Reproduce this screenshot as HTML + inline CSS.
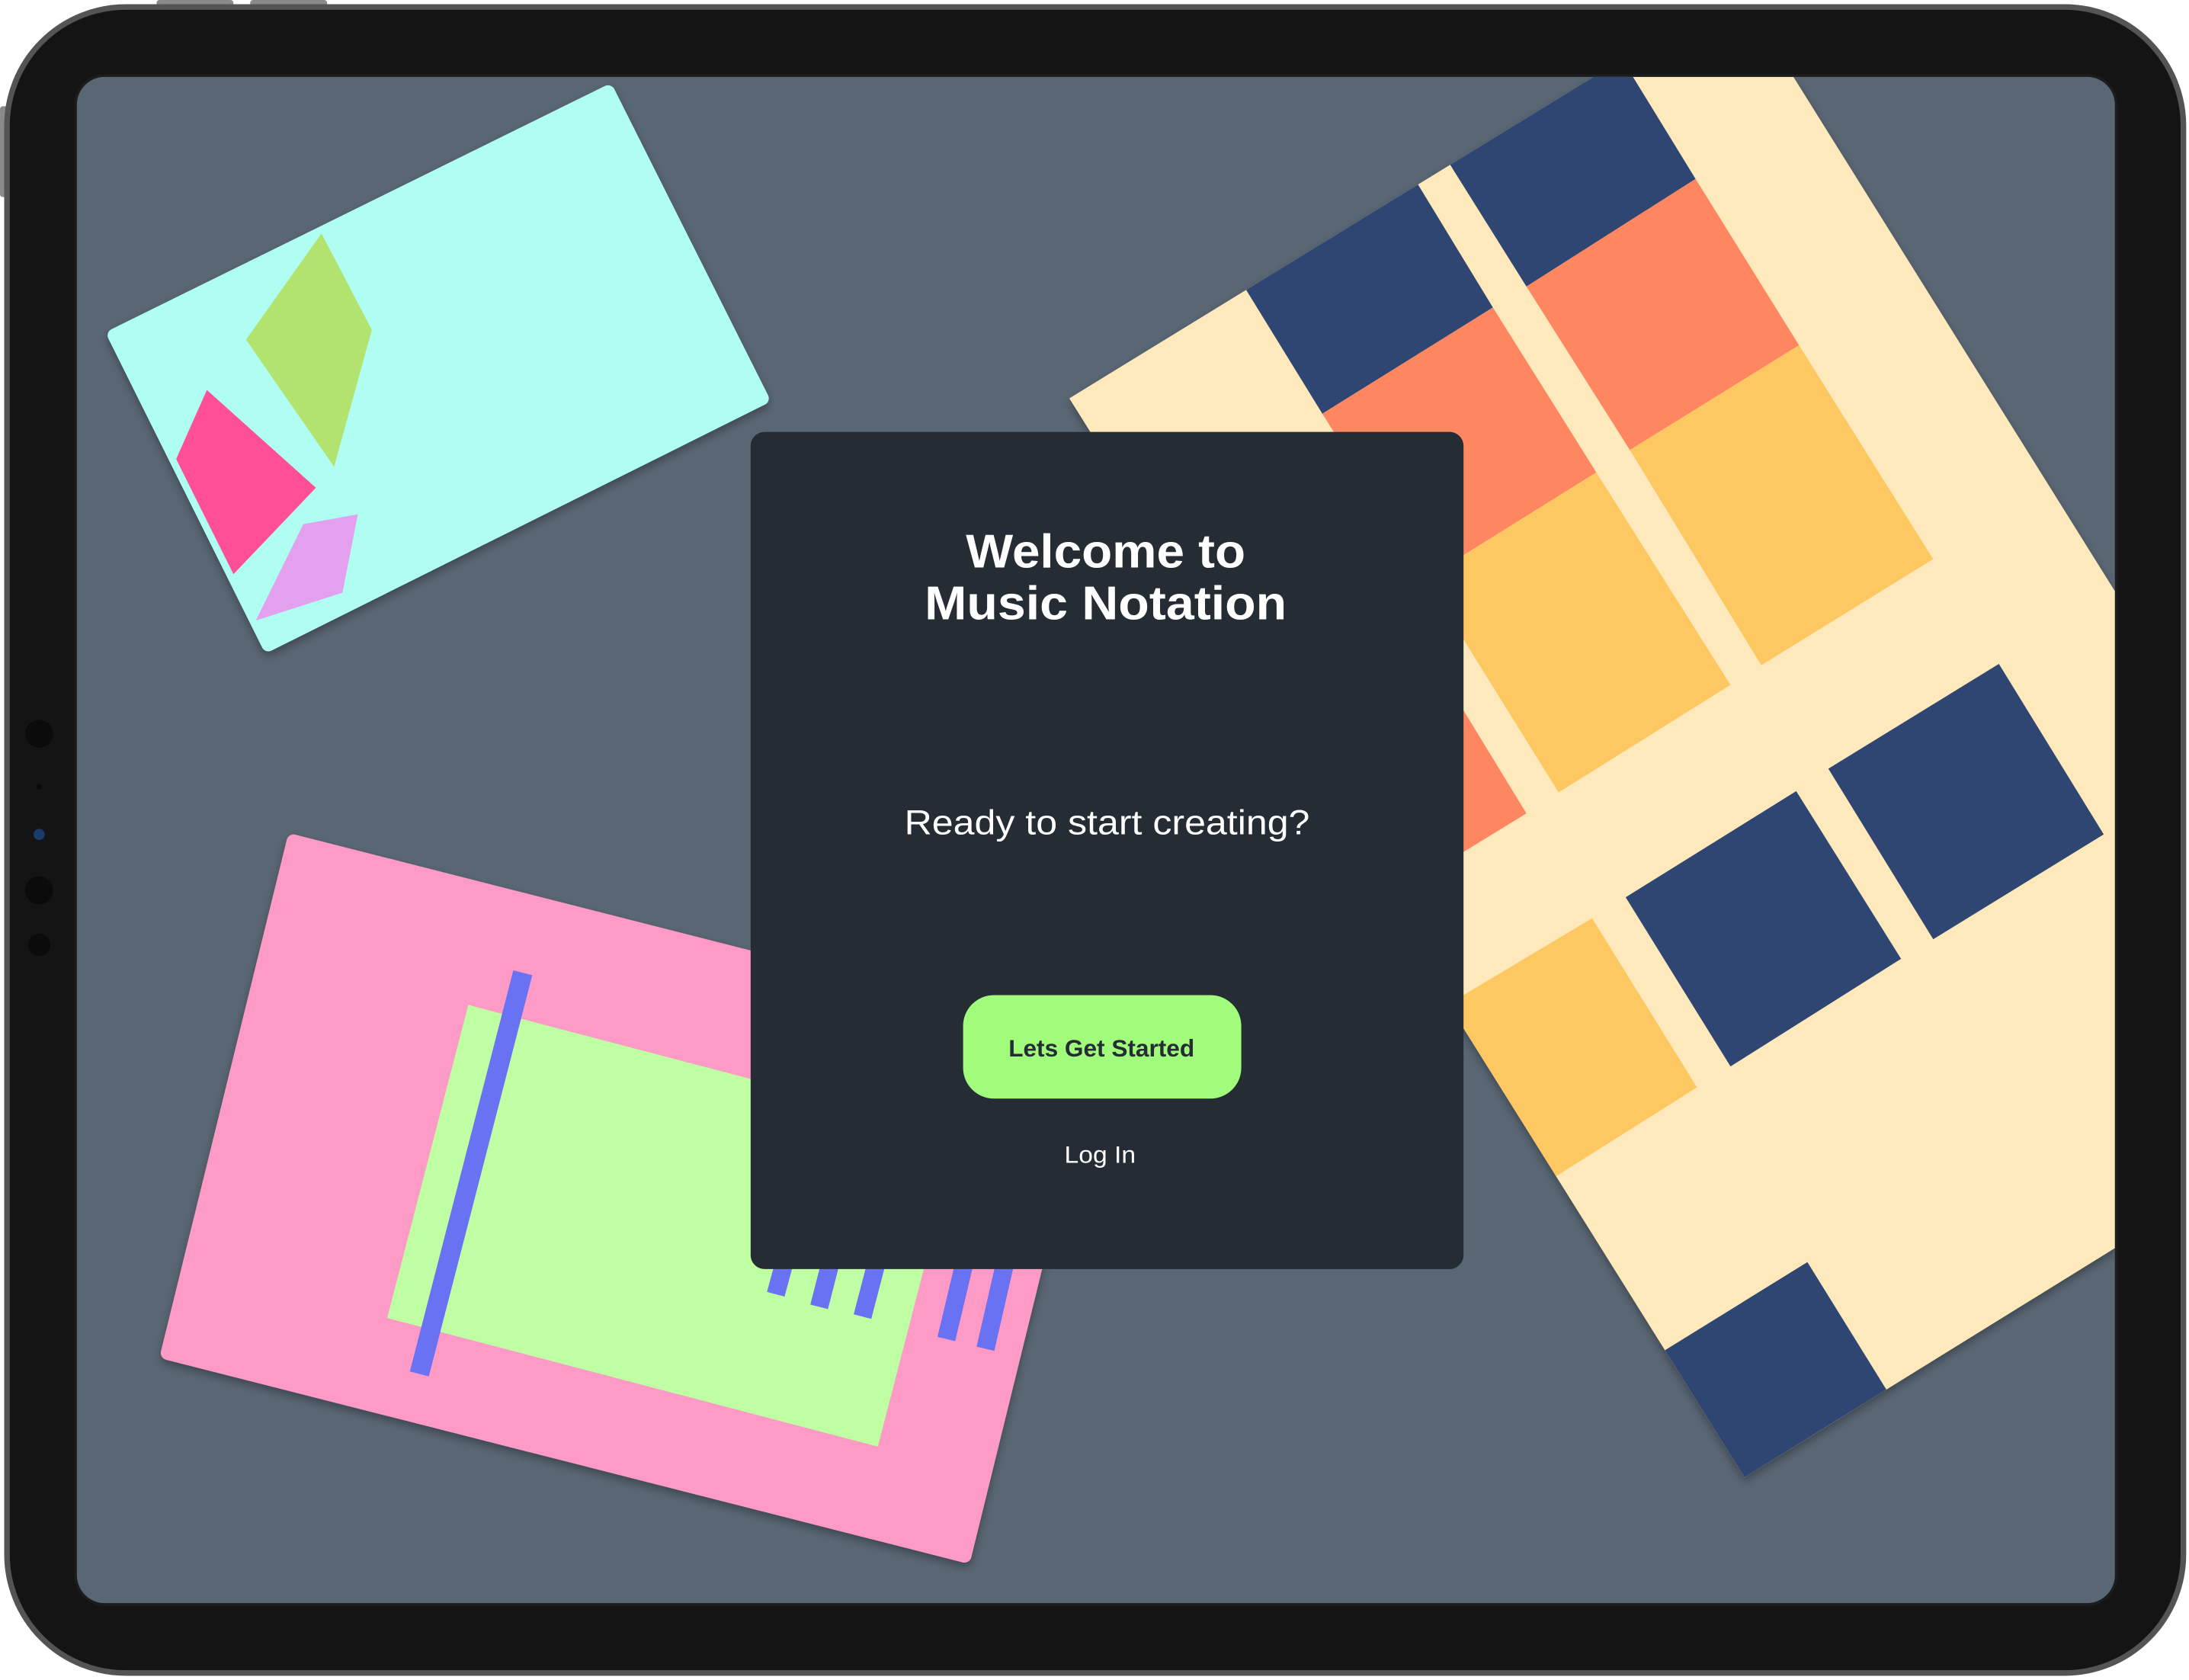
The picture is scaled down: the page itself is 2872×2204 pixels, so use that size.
<!DOCTYPE html>
<html><head><meta charset="utf-8"><style>
html,body{margin:0;padding:0;background:#fff;}
svg{display:block;}
text{font-family:"Liberation Sans","DejaVu Sans",sans-serif;}
</style></head><body>
<svg width="2872" height="2204" viewBox="0 0 1566 1202" preserveAspectRatio="none" xmlns="http://www.w3.org/2000/svg">
<defs>
<clipPath id="scr"><rect x="55" y="55" width="1458" height="1092" rx="20"/></clipPath>
<filter id="sh" x="-10%" y="-10%" width="120%" height="120%"><feDropShadow dx="0" dy="3" stdDeviation="3" flood-color="#000" flood-opacity="0.3"/></filter>
<clipPath id="cyan"><path d="M82,240 L435,66 L545,285 L192,461 Z"/></clipPath>
<clipPath id="pink"><path d="M210,602 L780,747 L690,1113 L120,968 Z"/></clipPath>
<clipPath id="cream"><path d="M765,285 L1140,55 L1283,55 L1513,423 L1513,893 L1248,1057 Z"/></clipPath>
</defs>
<rect width="1566" height="1202" fill="#ffffff"/>
<rect x="112" y="0" width="55" height="8" rx="2" fill="#8a8a8a"/>
<rect x="179" y="0" width="55" height="8" rx="2" fill="#8a8a8a"/>
<rect x="0" y="76" width="8" height="65" rx="2" fill="#8a8a8a"/>
<rect x="5" y="5" width="1557" height="1192" rx="85" fill="#141414" stroke="#545454" stroke-width="4"/>
<rect x="53" y="53" width="1462" height="1096" rx="22" fill="#1c1c1c"/>
<rect x="55" y="55" width="1458" height="1092" rx="20" fill="#596673"/>
<circle cx="28" cy="525" r="10" fill="#0b0b0b"/>
<circle cx="28" cy="563" r="2" fill="#0b0b0b"/>
<circle cx="28" cy="597" r="4" fill="#1a3c6a"/>
<circle cx="28" cy="637" r="10" fill="#0b0b0b"/>
<circle cx="28" cy="676" r="8" fill="#0b0b0b"/>
<g clip-path="url(#scr)">
 <g filter="url(#sh)">
 <path d="M765,285 L1140,55 L1283,55 L1513,423 L1513,893 L1248,1057 Z" fill="#fde9bb" stroke-linejoin="round"/>
 </g>
 <g clip-path="url(#cream)">
  <path d="M890,205 L1012,128 L1068,220 L946,296 Z" fill="#2f4672"/>
  <path d="M1035,114 L1130,40 L1159,40 L1213,128 L1092,205 Z" fill="#2f4672"/>
  <path d="M946,296 L1068,220 L1142,338 L1020,414 Z" fill="#fe8660"/>
  <path d="M1092,205 L1213,128 L1287,247 L1166,322 Z" fill="#fe8660"/>
  <path d="M1166,322 L1287,247 L1383,400 L1260,476 Z" fill="#fdc862"/>
  <path d="M1020,414 L1142,338 L1238,490 L1115,567 Z" fill="#fdc862"/>
  <path d="M995,545 L1045,505 L1092,582 L1020,626 Z" fill="#fe8660"/>
  <path d="M1163,642 L1285,566 L1360,686 L1238,763 Z" fill="#2f4672"/>
  <path d="M1308,550 L1430,475 L1505,597 L1383,672 Z" fill="#2f4672"/>
  <path d="M1000,740 L1139,657 L1214,778 L1111,843 Z" fill="#fdc862"/>
  <path d="M1188,968 L1293,903 L1350,995 L1250,1060 Z" fill="#2f4672"/>
 </g>
 <g filter="url(#sh)">
 <path d="M82,240 L435,66 L545,285 L192,461 Z" fill="#b0fef2" stroke="#b0fef2" stroke-width="10" stroke-linejoin="round"/>
 </g>
 <g clip-path="url(#cyan)">
  <path d="M176,243 L230,167 L266,236 L239,334 Z" fill="#b2e36e"/>
  <path d="M148,279 L226,349 L163,415 L130,420 L124,333 Z" fill="#ff4f97"/>
  <path d="M217,375 L256,368 L245,424 L183,444 Z" fill="#e3a0ef"/>
 </g>
 <g filter="url(#sh)">
 <path d="M210,602 L780,747 L690,1113 L120,968 Z" fill="#fd9ac5" stroke="#fd9ac5" stroke-width="10" stroke-linejoin="round"/>
 </g>
 <g clip-path="url(#pink)">
  <path d="M335,719 L686,811 L628,1035 L277,943 Z" fill="#c0fea4"/>
  <line x1="374" y1="696" x2="300" y2="983" stroke="#6872f2" stroke-width="14"/>
  <g stroke="#6872f2" stroke-width="13">
   <line x1="562" y1="900" x2="555" y2="926"/>
   <line x1="595" y1="900" x2="586" y2="935"/>
   <line x1="628" y1="900" x2="617" y2="942"/>
   <line x1="692" y1="895" x2="677" y2="958"/>
   <line x1="721" y1="895" x2="705" y2="965"/>
  </g>
 </g>
 <rect x="537" y="309" width="510" height="599" rx="10" fill="#262c34"/>
 <text x="791" y="406" text-anchor="middle" font-size="34" font-weight="bold" fill="#fff" textLength="200" lengthAdjust="spacingAndGlyphs">Welcome to</text>
 <text x="791" y="443" text-anchor="middle" font-size="34" font-weight="bold" fill="#fff" textLength="259" lengthAdjust="spacingAndGlyphs">Music Notation</text>
 <text x="792" y="597" text-anchor="middle" font-size="25" fill="#fff" textLength="290" lengthAdjust="spacingAndGlyphs">Ready to start creating?</text>
 <rect x="689" y="712" width="199" height="74" rx="22" fill="#a0fc7a"/>
 <text x="788" y="756" text-anchor="middle" font-size="17" font-weight="bold" fill="#262c34" textLength="133" lengthAdjust="spacingAndGlyphs">Lets Get Started</text>
 <text x="787" y="832" text-anchor="middle" font-size="17" fill="#fff" textLength="51" lengthAdjust="spacingAndGlyphs">Log In</text>
</g>
</svg>
</body></html>
